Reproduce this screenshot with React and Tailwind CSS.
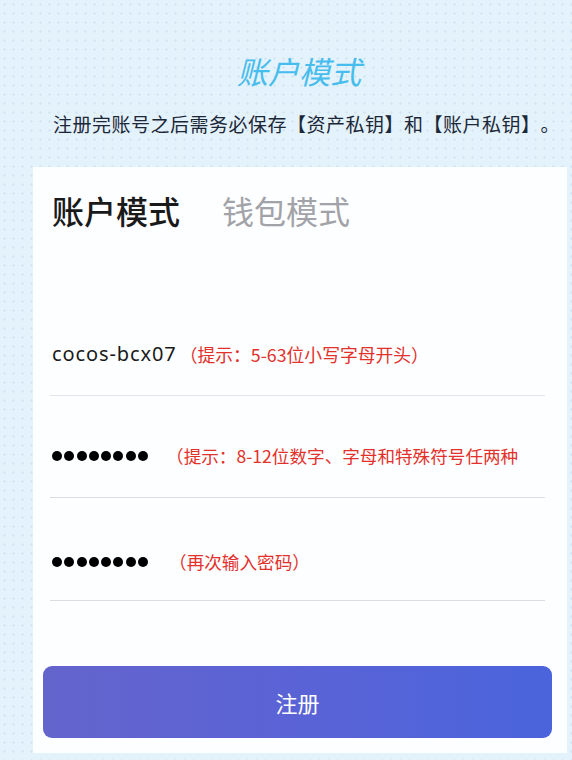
import React from "react";

const Dots = () => (
  <div className="flex items-center gap-[2.3px]">
    {[0, 1, 2, 3, 4, 5, 6, 7].map((i) => (
      <span key={i} className="block w-[10px] h-[10px] rounded-full bg-black" />
    ))}
  </div>
);

export default function App() {
  return (
    <div
      className="w-[572px] h-[760px] overflow-hidden bg-[#e4f2fb] bg-[radial-gradient(circle,#d3e6f2_1.1px,transparent_1.3px)] bg-[length:9px_9px] flex flex-col [text-spacing-trim:space-all]"
      style={{ fontFamily: '"Noto Sans CJK SC", "Noto Sans", sans-serif' }}
    >
      <div className="mt-[55px] h-[31px] leading-[31px] text-[31px] italic text-[#47bdee] text-center pl-[26px]">
        账户模式
      </div>
      <div className="mt-[28px] h-[20px] leading-[20px] text-[19px] tracking-[0.5px] text-[#1c2838] pl-[53px] whitespace-nowrap">
        注册完账号之后需务必保存【资产私钥】和【账户私钥】。
      </div>
      <div className="mt-[33px] ml-[33px] w-[534px] h-[586px] bg-[#fdfeff] flex flex-col">
        <div className="mt-[27px] pl-[19px] flex items-center gap-[42px] h-[32px] leading-[32px] text-[32px]">
          <span className="font-medium text-[#1a1a1a]">账户模式</span>
          <span className="text-[#a2a3a8]">钱包模式</span>
        </div>
        <div className="mt-[68px] ml-[17px] mr-[22px] flex flex-col">
          <div className="h-[102px] border-b border-[#e3e4e8] flex items-end pb-[31px] pl-[2px]">
            <div className="flex items-center h-[20px]">
              <span
                className="text-[20px] leading-[20px] tracking-[0.9px] text-[#1a1a1a]"
                style={{ fontFamily: '"Noto Sans", "Open Sans", sans-serif' }}
              >
                cocos-bcx07
              </span>
              <span className="ml-[3px] text-[17.8px] leading-[20px] text-[#e2312b] whitespace-nowrap">（提示：5-63位小写字母开头）</span>
            </div>
          </div>
          <div className="h-[102px] border-b border-[#dcdde0] flex items-end pb-[31px] pl-[2px]">
            <div className="flex items-center h-[20px]">
              <Dots />
              <span className="ml-[18px] text-[17.6px] leading-[20px] text-[#e2312b] whitespace-nowrap">（提示：8-12位数字、字母和特殊符号任两种</span>
            </div>
          </div>
          <div className="h-[103px] border-b border-[#dcdde0] flex items-end pb-[28px] pl-[2px]">
            <div className="flex items-center h-[20px]">
              <Dots />
              <span className="ml-[21px] text-[17.6px] leading-[20px] text-[#e2312b] whitespace-nowrap">（再次输入密码）</span>
            </div>
          </div>
        </div>
        <button className="mt-[65px] ml-[10px] w-[509px] h-[72px] rounded-[9px] bg-gradient-to-r from-[#6464cc] via-[#5a63d6] to-[#4a64dc] text-white text-[22px] flex items-center justify-center">
          注册
        </button>
      </div>
    </div>
  );
}
